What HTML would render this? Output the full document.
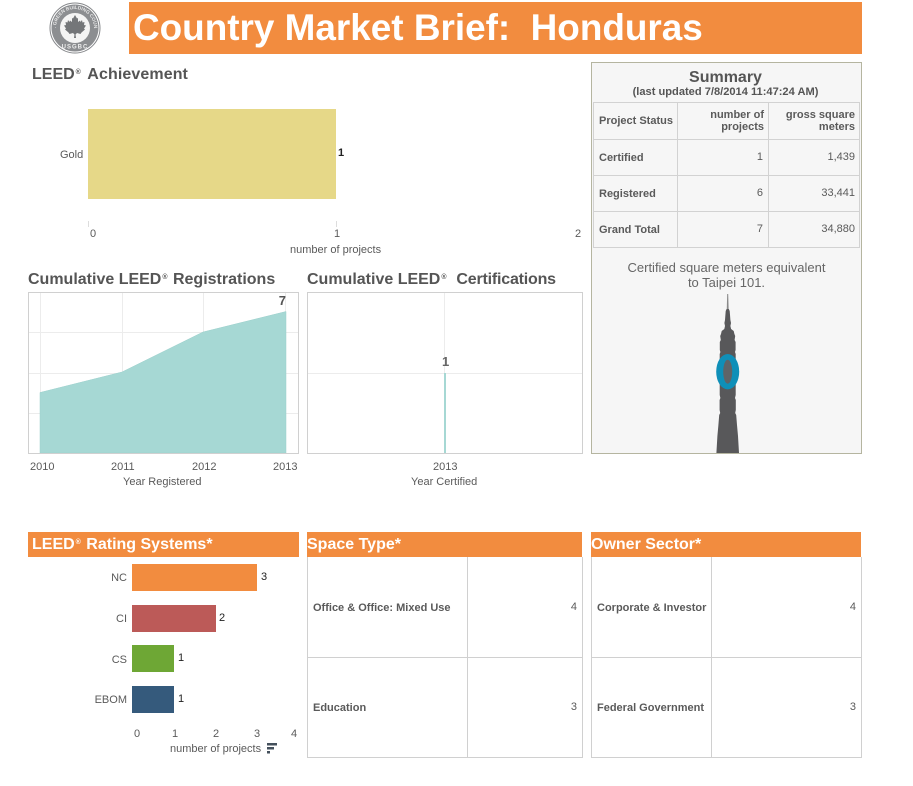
<!DOCTYPE html>
<html><head><meta charset="utf-8"><style>
html,body{margin:0;padding:0;background:#fff;width:913px;height:786px;overflow:hidden}
body{position:relative;font-family:"Liberation Sans",sans-serif;color:#555}
.t{position:absolute;white-space:nowrap;line-height:1}
.b{position:absolute}
.h{font-weight:bold;font-size:16px;color:#555}
.h sup,.w sup{font-size:7px;vertical-align:baseline;position:relative;top:-5px;margin:0 1px}
.w{font-weight:bold;font-size:16px;color:#fff}
.s{font-size:11px;color:#5a5a5a}
.m{font-size:11px;color:#5a5a5a}
.bd{font-weight:bold;font-size:11px;color:#5a5a5a}
.r{text-align:right}
.k{font-size:11px;color:#222}
</style></head><body>

<svg class="b" style="left:48px;top:1px" width="54" height="54" viewBox="0 0 54 54">
<circle cx="27" cy="27" r="25" fill="#fff" stroke="#85878a" stroke-width="1"/>
<circle cx="27" cy="27" r="23.500" fill="#8c8e91"/>
<circle cx="27" cy="27" r="15" fill="#f4f4f4"/>
<path d="M27 14l2 3.500 1-.5v4l2-1.500.5 1.500 1.500-2 .5 2.500 2-.5-.5 3 2 .5-2 3 1 1-3.500 3-1 1.500-3.500-1-1.500 1.500.5 3.500h-2l.5-3.500-1.500-1.500-3.500 1-1-1.500-3.500-3 1-1-2-3 2-.5-.5-3 2 .5.5-2.500 1.500 2 .5-1.500 2 1.500v-4l1 .5z" fill="#747679"/>
<defs><path id="arc" d="M8 27a19 19 0 0 1 38 0"/></defs>
<text font-family="Liberation Sans" font-size="4.800" font-weight="bold" fill="#e8e8e8"><textPath href="#arc" startOffset="50%" text-anchor="middle">U.S. GREEN BUILDING COUNCIL</textPath></text>
<text font-family="Liberation Sans" font-size="6" font-weight="bold" fill="#eee" letter-spacing="1" x="27" y="47.500" text-anchor="middle">USGBC</text>
</svg>

<div class="b" style="left:129px;top:2px;width:733px;height:52px;background:#f28c3f"></div>
<div class="t" style="left:133px;top:10px;font-size:36.900px;font-weight:bold;color:#fff;white-space:pre">Country Market Brief:  Honduras</div>

<div class="t h" style="left:32px;top:67px">LEED<sup style="margin-right:2px">®</sup> <span style="letter-spacing:.1px">Achievement</span></div>
<div class="b" style="left:88px;top:109px;width:248px;height:90px;background:#e6d888"></div>
<div class="t m" style="left:60px;top:150px">Gold</div>
<div class="t" style="left:338px;top:148px;font-size:11px;font-weight:bold;color:#222">1</div>
<div class="b" style="left:88px;top:221px;width:1px;height:6px;background:#ddd"></div>
<div class="b" style="left:336px;top:221px;width:1px;height:6px;background:#ddd"></div>
<div class="t s" style="left:90px;top:229px">0</div>
<div class="t s" style="left:334px;top:229px">1</div>
<div class="t s" style="left:575px;top:229px">2</div>
<div class="t s" style="left:290px;top:245px">number of projects</div>

<div class="b" style="left:591px;top:62px;width:269px;height:390px;background:#f6f6f6;border:1px solid #b5b5a0"></div>
<div class="t" style="left:590px;top:70px;width:271px;text-align:center;font-size:16px;font-weight:bold;color:#555">Summary</div>
<div class="t" style="left:590px;top:87px;width:271px;text-align:center;font-size:11.100px;font-weight:bold;color:#555">(last updated 7/8/2014 11:47:24 AM)</div>

<svg class="b" style="left:590px;top:100px" width="275" height="150">
<g stroke="#d2d2d2" stroke-width="1" fill="none">
<path d="M3.500 2.500H269.500V147.500H3.500ZM3.500 39.500H269.500M3.500 75.500H269.500M3.500 111.500H269.500M87.500 2.500V147.500M178.500 2.500V147.500"/>
</g></svg>
<div class="t bd" style="left:599px;top:116px">Project Status</div>
<div class="t bd r" style="left:680px;top:109px;width:84px;line-height:12px;white-space:normal">number of projects</div>
<div class="t bd r" style="left:775px;top:109px;width:80px;line-height:12px;white-space:normal">gross square meters</div>
<div class="t bd" style="left:599px;top:153px">Certified</div>
<div class="t bd" style="left:599px;top:189px">Registered</div>
<div class="t bd" style="left:599px;top:225px">Grand Total</div>
<div class="t m r" style="left:700px;top:152px;width:63px">1</div>
<div class="t m r" style="left:700px;top:188px;width:63px">6</div>
<div class="t m r" style="left:700px;top:224px;width:63px">7</div>
<div class="t m r" style="left:790px;top:152px;width:65px">1,439</div>
<div class="t m r" style="left:790px;top:188px;width:65px">33,441</div>
<div class="t m r" style="left:790px;top:224px;width:65px">34,880</div>
<div class="t" style="left:591px;top:260px;width:271px;text-align:center;font-size:13px;line-height:15px;color:#666">Certified square meters equivalent<br>to Taipei 101.</div>

<svg class="b" style="left:700px;top:290px" width="56" height="164" viewBox="700 290 56 164">
<path d="M727.200 294h1l.5 17h-2z" fill="#8a8a8a"/>
<path d="M725.700 311L726.600 309H728.800L729.700 311L730.400 320L731 323L730.400 326L731.100 329L733.700 331L734.400 334L735.200 336L734.600 340L735.600 342V350L735 352L735.700 354V395L735 398L735.800 400V410L735.200 413L736.200 415L737 425L738 436L739 453H716.400L717.400 436L718.400 425L719.200 415L720.200 413L719.600 410V400L720.400 398L719.700 395V354L720.400 352L719.800 350V342L720.800 340L720.200 336L721 334L721.700 331L724.300 329L725 326L724.400 323L725 320Z" fill="#58585a"/>
<ellipse cx="727.700" cy="371.700" rx="11.500" ry="17.700" fill="#0f8fb8"/>
<ellipse cx="727.700" cy="371.700" rx="4.500" ry="12" fill="#5f6468"/>
</svg>

<div class="t h" style="left:28px;top:272px">Cumulative LEED<sup>®</sup> Registrations</div>
<svg class="b" style="left:27px;top:291px" width="273" height="164" viewBox="27 291 273 164">
<rect x="28.500" y="292.500" width="270" height="161" fill="#fff" stroke="#d0d0d0"/>
<g stroke="#ececec"><path d="M40.500 293V453M122.500 293V453M203.500 293V453M285.500 293V453M29 332.500H298M29 373.500H298M29 413.500H298"/></g>
<path d="M40 392.500L122 372L203 332L286 311.500V453H40Z" fill="#a6d8d4" stroke="#9bcfcb" stroke-width=".5"/>
<path d="M28.500 453.500H298.500" stroke="#d0d0d0"/>
</svg>
<div class="t" style="left:266px;top:294px;width:20px;text-align:right;font-size:13px;font-weight:bold;color:#555">7</div>
<div class="t s" style="left:30px;top:462px">2010</div>
<div class="t s" style="left:111px;top:462px">2011</div>
<div class="t s" style="left:192px;top:462px">2012</div>
<div class="t s" style="left:273px;top:462px">2013</div>
<div class="t s" style="left:123px;top:477px">Year Registered</div>

<div class="t h" style="left:307px;top:272px;white-space:pre">Cumulative LEED<sup>®</sup>  <span style="letter-spacing:-.2px">Certifications</span></div>
<svg class="b" style="left:306px;top:291px" width="278" height="164" viewBox="306 291 278 164">
<rect x="307.500" y="292.500" width="275" height="161" fill="#fff" stroke="#d0d0d0"/>
<g stroke="#ececec"><path d="M444.500 293V453M308 373.500H582"/></g>
<rect x="444" y="373" width="2" height="80" fill="#a6d8d4"/>
</svg>
<div class="t" style="left:442px;top:355px;font-size:13px;font-weight:bold;color:#666">1</div>
<div class="t s" style="left:433px;top:462px">2013</div>
<div class="t s" style="left:411px;top:477px">Year Certified</div>

<div class="b" style="left:28px;top:532px;width:271px;height:25px;background:#f28c3f"></div>
<div class="t w" style="left:32px;top:537px">LEED<sup>®</sup> Rating Systems*</div>
<div class="t s r" style="left:80px;top:573px;width:47px">NC</div>
<div class="t s r" style="left:80px;top:614px;width:47px">CI</div>
<div class="t s r" style="left:80px;top:655px;width:47px">CS</div>
<div class="t s r" style="left:80px;top:695px;width:47px">EBOM</div>
<div class="b" style="left:132px;top:564px;width:125px;height:27px;background:#f28c3f"></div>
<div class="b" style="left:132px;top:605px;width:84px;height:27px;background:#bc5a58"></div>
<div class="b" style="left:132px;top:645px;width:42px;height:27px;background:#6ea735"></div>
<div class="b" style="left:132px;top:686px;width:42px;height:27px;background:#355a7c"></div>
<div class="t k" style="left:261px;top:572px">3</div>
<div class="t k" style="left:219px;top:613px">2</div>
<div class="t k" style="left:178px;top:653px">1</div>
<div class="t k" style="left:178px;top:694px">1</div>
<div class="t s" style="left:134px;top:729px">0</div>
<div class="t s" style="left:172px;top:729px">1</div>
<div class="t s" style="left:213px;top:729px">2</div>
<div class="t s" style="left:254px;top:729px">3</div>
<div class="t s" style="left:291px;top:729px">4</div>
<div class="t s" style="left:170px;top:744px">number of projects</div>
<svg class="b" style="left:267px;top:743px" width="11" height="11"><path d="M0 0h10v2.500H0zM0 4h7v2.500H0zM0 8h3v2.500H0z" fill="#44505c"/></svg>

<div class="b" style="left:307px;top:532px;width:275px;height:25px;background:#f28c3f"></div>
<div class="t w" style="left:307px;top:537px">Space Type*</div>
<svg class="b" style="left:306px;top:556px" width="278" height="203"><g stroke="#d0d0d0" fill="none"><path d="M1.500 1V201.500H276.500V1M161.500 1V201.500M1.500 101.500H276.500"/></g></svg>
<div class="t bd" style="left:313px;top:603px">Office &amp; Office: Mixed Use</div>
<div class="t bd" style="left:313px;top:703px">Education</div>
<div class="t m r" style="left:540px;top:602px;width:37px">4</div>
<div class="t m r" style="left:540px;top:702px;width:37px">3</div>

<div class="b" style="left:591px;top:532px;width:270px;height:25px;background:#f28c3f"></div>
<div class="t w" style="left:591px;top:537px">Owner Sector*</div>
<svg class="b" style="left:590px;top:556px" width="273" height="203"><g stroke="#d0d0d0" fill="none"><path d="M1.500 1V201.500H271.500V1M121.500 1V201.500M1.500 101.500H271.500"/></g></svg>
<div class="t bd" style="left:597px;top:603px">Corporate &amp; Investor</div>
<div class="t bd" style="left:597px;top:703px">Federal Government</div>
<div class="t m r" style="left:820px;top:602px;width:36px">4</div>
<div class="t m r" style="left:820px;top:702px;width:36px">3</div>
</body></html>
